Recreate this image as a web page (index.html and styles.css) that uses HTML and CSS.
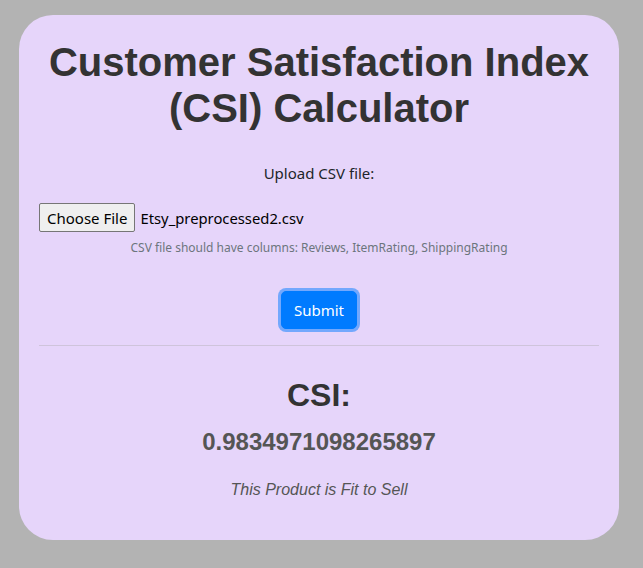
FILE: index.html
```html
<!DOCTYPE html>
<html>
<head>
<meta charset="utf-8">
<link rel="stylesheet" href="styles.css">
</head>
<body>
<div class="card">
  <h1 class="title">Customer Satisfaction Index (CSI) Calculator</h1>
  <form class="form">
    <label class="label">Upload CSV file:</label>
    <div class="file-row">
      <span class="file-btn">Choose File</span>
      <span class="file-name">Etsy_preprocessed2.csv</span>
    </div>
    <small class="hint">CSV file should have columns: Reviews, ItemRating, ShippingRating</small>
    <div class="submit-wrap"><span class="submit">Submit</span></div>
  </form>
  <hr class="rule">
  <h2 class="csi">CSI:</h2>
  <h3 class="value">0.9834971098265897</h3>
  <p class="verdict">This Product is Fit to Sell</p>
</div>
</body>
</html>
```

FILE: styles.css
```css
html, body {
  margin: 0;
  padding: 0;
  background: #b3b3b3;
  height: 100%;
}
body {
  font-family: "Noto Sans", "Open Sans", sans-serif;
  color: #212529;
}
.card {
  box-sizing: border-box;
  width: 600px;
  margin: 15px 0 0 19px;
  padding: 20px 20px 40px;
  background: #e6d5fa;
  border-radius: 34px;
}
.title {
  margin: 0;
  padding-top: 4px;
  text-align: center;
  font-family: "Liberation Sans", Arial, sans-serif;
  font-weight: 700;
  font-size: 40px;
  line-height: 46px;
  color: #333;
}
.form {
  display: flex;
  flex-direction: column;
  margin-top: 30px;
}
.label {
  text-align: center;
  font-size: 15px;
  line-height: 24px;
}
.file-row {
  display: flex;
  align-items: center;
  margin-top: 18px;
  font-size: 15px;
}
.file-btn {
  box-sizing: border-box;
  height: 29px;
  padding: 0 7px;
  display: flex;
  align-items: center;
  background: #efefef;
  border: 1px solid #767676;
  border-radius: 2px;
  color: #000;
}
.file-name {
  margin-left: 5px;
  color: #000;
  font-size: 14.8px;
}
.hint {
  margin-top: 6px;
  text-align: center;
  font-size: 12px;
  line-height: 20px;
  color: #6c757d;
}
.submit-wrap {
  display: flex;
  justify-content: center;
  margin-top: 33px;
}
.submit {
  box-sizing: border-box;
  height: 38px;
  padding: 0 12px;
  display: flex;
  align-items: center;
  background: #007bff;
  border: 1px solid #007bff;
  border-radius: 5px;
  color: #fff;
  font-size: 15px;
  box-shadow: 0 0 0 3px rgba(0, 123, 255, 0.5);
}
.rule {
  margin: 16px 0 0;
  border: 0;
  border-top: 1px solid #cfc4db;
}
.csi {
  margin: 30px 0 0;
  text-align: center;
  font-family: "Liberation Sans", Arial, sans-serif;
  font-weight: 700;
  font-size: 32px;
  line-height: 38px;
  color: #333;
}
.value {
  margin: 13px 0 0;
  text-align: center;
  font-family: "Liberation Sans", Arial, sans-serif;
  font-weight: 700;
  font-size: 24px;
  line-height: 30px;
  color: #555;
}
.verdict {
  margin: 23px 0 0;
  text-align: center;
  font-family: "Liberation Sans", Arial, sans-serif;
  font-style: italic;
  font-size: 16px;
  line-height: 20px;
  color: #555;
}
```
